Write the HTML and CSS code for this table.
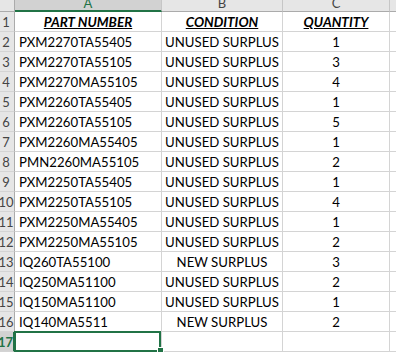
FILE: index.html
```html
<!DOCTYPE html>
<html>
<head>
<meta charset="utf-8">
<link rel="stylesheet" href="styles.css">
</head>
<body>
<div class="sheet">
  <div class="ch corner"></div><div class="ch sel">A</div><div class="ch">B</div><div class="ch">C</div><div class="ch"></div>

  <div class="rh">1</div><div class="c hd">PART NUMBER</div><div class="c hd">CONDITION</div><div class="c hd">QUANTITY</div><div class="c"></div>
  <div class="rh">2</div><div class="c l">PXM2270TA55405</div><div class="c">UNUSED SURPLUS</div><div class="c">1</div><div class="c"></div>
  <div class="rh">3</div><div class="c l">PXM2270TA55105</div><div class="c">UNUSED SURPLUS</div><div class="c">3</div><div class="c"></div>
  <div class="rh">4</div><div class="c l">PXM2270MA55105</div><div class="c">UNUSED SURPLUS</div><div class="c">4</div><div class="c"></div>
  <div class="rh">5</div><div class="c l">PXM2260TA55405</div><div class="c">UNUSED SURPLUS</div><div class="c">1</div><div class="c"></div>
  <div class="rh">6</div><div class="c l">PXM2260TA55105</div><div class="c">UNUSED SURPLUS</div><div class="c">5</div><div class="c"></div>
  <div class="rh">7</div><div class="c l">PXM2260MA55405</div><div class="c">UNUSED SURPLUS</div><div class="c">1</div><div class="c"></div>
  <div class="rh">8</div><div class="c l">PMN2260MA55105</div><div class="c">UNUSED SURPLUS</div><div class="c">2</div><div class="c"></div>
  <div class="rh">9</div><div class="c l">PXM2250TA55405</div><div class="c">UNUSED SURPLUS</div><div class="c">1</div><div class="c"></div>
  <div class="rh">10</div><div class="c l">PXM2250TA55105</div><div class="c">UNUSED SURPLUS</div><div class="c">4</div><div class="c"></div>
  <div class="rh">11</div><div class="c l">PXM2250MA55405</div><div class="c">UNUSED SURPLUS</div><div class="c">1</div><div class="c"></div>
  <div class="rh">12</div><div class="c l">PXM2250MA55105</div><div class="c">UNUSED SURPLUS</div><div class="c">2</div><div class="c"></div>
  <div class="rh">13</div><div class="c l">IQ260TA55100</div><div class="c">NEW SURPLUS</div><div class="c">3</div><div class="c"></div>
  <div class="rh">14</div><div class="c l">IQ250MA51100</div><div class="c">UNUSED SURPLUS</div><div class="c">2</div><div class="c"></div>
  <div class="rh">15</div><div class="c l">IQ150MA51100</div><div class="c">UNUSED SURPLUS</div><div class="c">1</div><div class="c"></div>
  <div class="rh">16</div><div class="c l">IQ140MA5511</div><div class="c">NEW SURPLUS</div><div class="c">2</div><div class="c"></div>
  <div class="rh selrow">17</div><div class="c l active"><span class="handle"></span></div><div class="c"></div><div class="c"></div><div class="c"></div>
</div>
</body>
</html>
```
FILE: styles.css
```css
html, body {
  margin: 0;
  padding: 0;
  background: #ffffff;
  overflow: hidden;
}

.sheet {
  display: grid;
  grid-template-columns: 15px 147px 121px 107px 60px;
  grid-template-rows: 12px;
  grid-auto-rows: 20px;
  font-family: Lato, "Liberation Sans", sans-serif;
  font-size: 13.2px;
  color: #000;
}

.sheet > div {
  box-sizing: border-box;
  border-right: 1px solid #d4d4d4;
  border-bottom: 1px solid #d4d4d4;
  display: flex;
  white-space: nowrap;
}

.ch {
  background: #e6e6e6;
  border-right-color: #c6c6c6 !important;
  border-bottom-color: #ababab !important;
  justify-content: center;
  align-items: center;
  padding-bottom: 4px;
  line-height: 11px;
  font-size: 13px;
  color: #444;
  overflow: hidden;
}

.ch.corner {
  border-right-color: #ababab !important;
}

.ch.sel {
  background: #d2d2d2;
  color: #217346;
  border-bottom: 2px solid #217346 !important;
  padding-bottom: 3px;
}

.rh {
  background: #e6e6e6;
  border-right-color: #ababab !important;
  justify-content: center;
  align-items: flex-end;
  padding-right: 2px;
  padding-bottom: 1px;
  line-height: 15px;
  font-size: 13px;
  color: #444;
}

.rh.selrow {
  background: #d2d2d2;
  color: #217346;
  font-weight: bold;
  border-right: 2px solid #217346 !important;
}

.c {
  justify-content: center;
  align-items: flex-end;
  padding-bottom: 1px;
  line-height: 15px;
}

.c.l {
  justify-content: flex-start;
  padding-left: 4px;
}

.c.hd {
  font-weight: bold;
  font-style: italic;
  text-decoration: underline;
  font-size: 13.5px;
}

.active {
  position: relative;
  overflow: visible;
}

.active::after {
  content: "";
  position: absolute;
  top: -1px;
  left: -1px;
  right: 0;
  bottom: -1px;
  border: 2px solid #217346;
  box-sizing: border-box;
}

.handle {
  position: absolute;
  right: -3px;
  bottom: -3px;
  width: 5px;
  height: 5px;
  background: #217346;
  border: 1px solid #ffffff;
  z-index: 2;
}
```
